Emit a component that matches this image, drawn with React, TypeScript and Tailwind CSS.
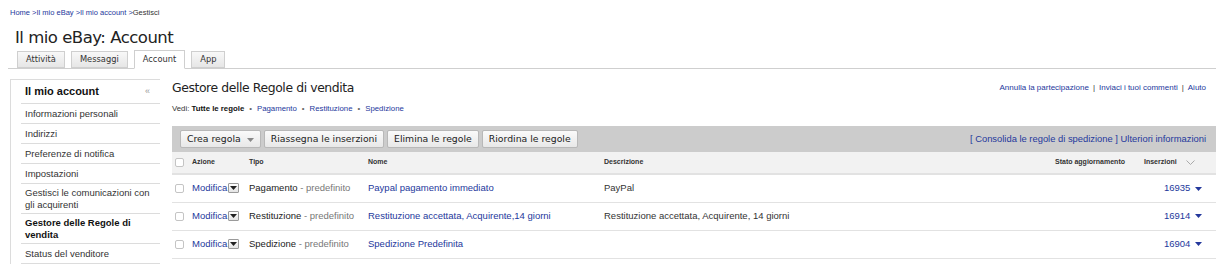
import React from 'react';

const blue = 'text-[#24389c]';

function Caret() {
  return (
    <svg width="7" height="4" viewBox="0 0 7 4" className="inline-block">
      <path d="M0 0h7L3.5 4z" fill="currentColor" />
    </svg>
  );
}

function Check() {
  return <span className="block w-[9px] h-[9px] rounded-[2px] border border-[#c4c4c4] bg-white" />;
}

function Modifica() {
  return (
    <span className="flex items-center">
      <span className={blue}>Modifica</span>
      <span className="ml-[1px] w-[11px] h-[10px] border border-[#9a9a9a] rounded-[1px] bg-gradient-to-b from-white to-[#e4e4e4] flex items-center justify-center text-[#222]">
        <Caret />
      </span>
    </span>
  );
}

const sideItems: { label: string; bold?: boolean; tall?: boolean }[] = [
  { label: 'Informazioni personali' },
  { label: 'Indirizzi' },
  { label: 'Preferenze di notifica' },
  { label: 'Impostazioni' },
  { label: 'Gestisci le comunicazioni con gli acquirenti', tall: true },
  { label: 'Gestore delle Regole di vendita', bold: true, tall: true },
  { label: 'Status del venditore' },
];

const rows = [
  { tipo: 'Pagamento', nome: 'Paypal pagamento immediato', desc: 'PayPal', n: '16935' },
  { tipo: 'Restituzione', nome: 'Restituzione accettata, Acquirente,14 giorni', desc: 'Restituzione accettata, Acquirente, 14 giorni', n: '16914' },
  { tipo: 'Spedizione', nome: 'Spedizione Predefinita', desc: '', n: '16904' },
];

const tabs = ['Attività', 'Messaggi', 'Account', 'App'];
const buttons = ['Riassegna le inserzioni', 'Elimina le regole', 'Riordina le regole'];

export default function App() {
  return (
    <div className="w-[1216px] h-[267px] overflow-hidden bg-white text-[#333] font-['Liberation_Sans',Arial,sans-serif]">
      {/* breadcrumb */}
      <div className="pl-[10px] pt-[8px] text-[7.5px] leading-[10px]">
        <span className={blue}>Home &gt;Il mio eBay &gt;Il mio account &gt;</span>
        <span>Gestisci</span>
      </div>

      {/* title */}
      <div className="pl-[15px] mt-[10px] text-[16.5px] leading-[20px] text-[#222] font-['DejaVu_Sans',Verdana,sans-serif] tracking-[-0.5px]">
        Il mio eBay: Account
      </div>

      {/* tabs */}
      <div className="ml-[8px] mt-[1px] h-[20px] border-b border-[#cfcfcf] flex items-end gap-[6px] pl-[9px] font-['DejaVu_Sans',Verdana,sans-serif] text-[8.3px] text-[#333]">
        {tabs.map(t => (
          <div
            key={t}
            className={
              t === 'Account'
                ? 'h-[19px] -mb-[1px] px-[8px] bg-white border border-[#cfcfcf] border-b-white flex items-center'
                : 'h-[17px] px-[8px] bg-gradient-to-b from-[#f8f8f8] to-[#e6e6e6] border border-[#cfcfcf] flex items-center'
            }
          >
            {t}
          </div>
        ))}
      </div>

      <div className="flex mt-[10px]">
        {/* sidebar */}
        <div className="ml-[10px] w-[150px] border-l border-t border-[#dcdcdc] pl-[10px] shrink-0">
          <div className="h-[24px] border-b border-[#dcdcdc] flex items-center justify-between pl-[4px] pr-[10px]">
            <span className="font-bold text-[11px] text-[#111]">Il mio account</span>
            <span className="text-[9px] text-[#999]">«</span>
          </div>
          {sideItems.map(it => (
            <div
              key={it.label}
              className={`${it.tall ? 'h-[30px]' : 'h-[20px]'} border-b border-[#dcdcdc] flex items-center pl-[4px] pr-[6px] text-[9.5px] leading-[12px] ${it.bold ? 'font-bold text-[#111]' : 'text-[#333]'}`}
            >
              {it.label}
            </div>
          ))}
        </div>

        {/* main */}
        <div className="ml-[12px] flex-1 min-w-0">
          <div className="flex items-center justify-between h-[18px] pr-[10px]">
            <span className="font-['DejaVu_Sans',Verdana,sans-serif] text-[12.4px] text-[#222] tracking-[-0.4px]">Gestore delle Regole di vendita</span>
            <span className="text-[8px] text-[#333]">
              <span className={blue}>Annulla la partecipazione</span>
              <span className="mx-[4px]">|</span>
              <span className={blue}>Inviaci i tuoi commenti</span>
              <span className="mx-[4px]">|</span>
              <span className={blue}>Aiuto</span>
            </span>
          </div>

          <div className="mt-[7px] text-[7.8px] leading-[10px]">
            Vedi: <span className="font-bold text-[#111]">Tutte le regole</span>
            <span className="mx-[5px] text-[#666]">•</span>
            <span className={blue}>Pagamento</span>
            <span className="mx-[5px] text-[#666]">•</span>
            <span className={blue}>Restituzione</span>
            <span className="mx-[5px] text-[#666]">•</span>
            <span className={blue}>Spedizione</span>
          </div>

          {/* toolbar */}
          <div className="mt-[12px] h-[26px] bg-[#cccccc] flex items-center justify-between pl-[8px] pr-[10px]">
            <div className="flex gap-[3px] font-['DejaVu_Sans',Verdana,sans-serif] text-[9.3px] text-[#222]">
              <div className="h-[18px] px-[6px] border border-[#b8b8b8] rounded-[2px] bg-gradient-to-b from-[#fafafa] to-[#e8e8e8] flex items-center gap-[6px]">
                Crea regola
                <span className="text-[#888]"><Caret /></span>
              </div>
              {buttons.map(b => (
                <div key={b} className="h-[18px] px-[6px] border border-[#b8b8b8] rounded-[2px] bg-gradient-to-b from-[#fafafa] to-[#e8e8e8] flex items-center">
                  {b}
                </div>
              ))}
            </div>
            <span className={`text-[9.4px] ${blue}`}>[ Consolida le regole di spedizione ] Ulteriori informazioni</span>
          </div>

          {/* table */}
          <table className="w-full border-collapse text-[9.5px]">
            <thead>
              <tr className="h-[22px] bg-[#f2f2f2] border-b-2 border-[#e2e2e2] text-[7px] font-bold text-[#333] text-left">
                <th className="w-[20px] pl-[3px]"><Check /></th>
                <th className="w-[57px] font-bold">Azione</th>
                <th className="w-[119px] font-bold">Tipo</th>
                <th className="w-[236px] font-bold">Nome</th>
                <th className="font-bold">Descrizione</th>
                <th className="w-[89px] font-bold">Stato aggiornamento</th>
                <th className="w-[72px] font-bold">
                  <span className="flex items-center gap-[9px]">
                    Inserzioni
                    <svg width="9" height="5" viewBox="0 0 9 5"><path d="M0.5 0.5L4.5 4.5L8.5 0.5" fill="none" stroke="#aaa" strokeWidth="1" /></svg>
                  </span>
                </th>
              </tr>
            </thead>
            <tbody>
              {rows.map(r => (
                <tr key={r.n} className="h-[28px] border-b border-[#e2e2e2]">
                  <td className="pl-[3px]"><Check /></td>
                  <td><Modifica /></td>
                  <td className="text-[#222]">
                    {r.tipo} <span className="text-[#777]">- predefinito</span>
                  </td>
                  <td className={blue}>{r.nome}</td>
                  <td className="text-[#333]">{r.desc}</td>
                  <td />
                  <td className={`${blue} text-right pr-[14px]`}>
                    {r.n} <span className="ml-[2px]"><Caret /></span>
                  </td>
                </tr>
              ))}
            </tbody>
          </table>
        </div>
      </div>
    </div>
  );
}
